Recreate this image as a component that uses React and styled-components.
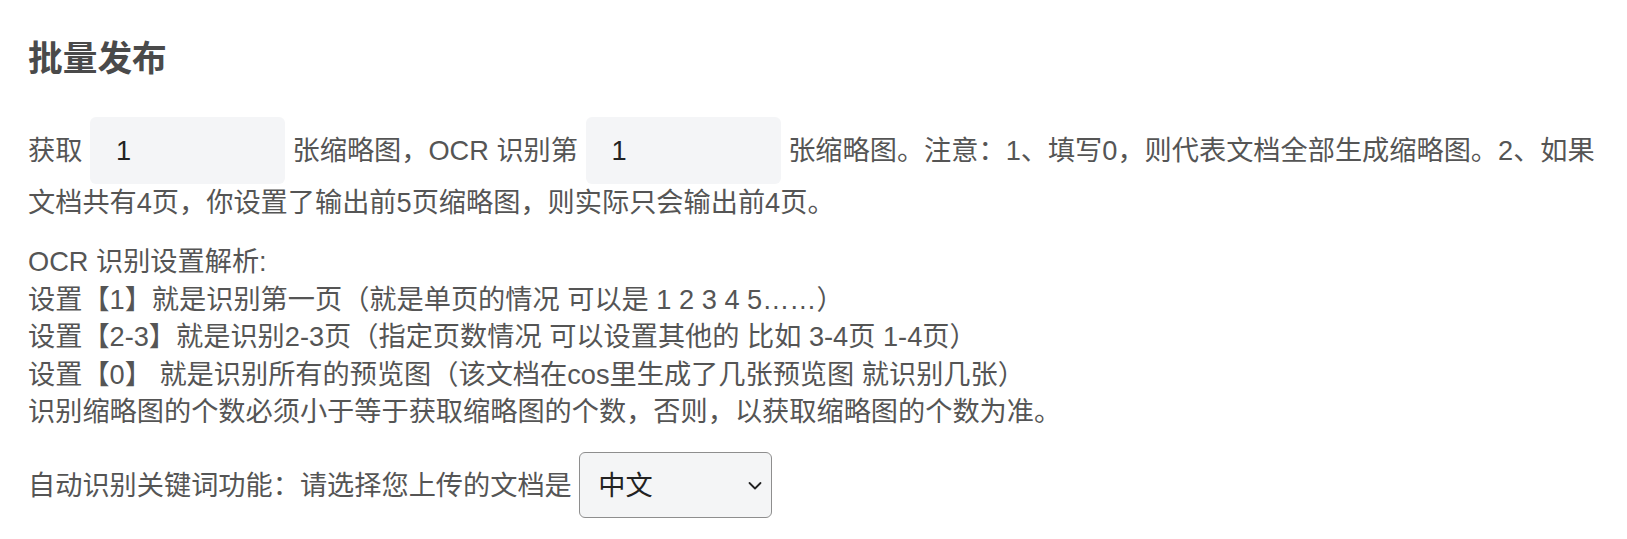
import React, { useState } from "react";
import styled, { createGlobalStyle } from "styled-components";

const GlobalStyle = createGlobalStyle`
  html, body {
    margin: 0;
    padding: 0;
    background: #fff;
  }
  body {
    font-family: "Liberation Sans", "Noto Sans CJK SC", sans-serif;
  }
`;

const Page = styled.div`
  padding: 39px 28px 0;
  color: #555;
  font-size: 27.2px;
  line-height: 37.5px;
`;

const Heading = styled.h2`
  margin: 0 0 37px;
  font-size: 34.7px;
  line-height: 41px;
  font-weight: 700;
  color: #4a4a4a;
`;

const Paragraph = styled.p`
  margin: 0 0 21.5px;
`;

const NumberInput = styled.input`
  box-sizing: border-box;
  width: 195px;
  height: 67px;
  padding: 0 0 0 26px;
  border: none;
  border-radius: 6px;
  background: #f4f5f7;
  color: #222;
  font-family: inherit;
  font-size: 27.2px;
  outline: none;
`;

const SelectWrap = styled.span`
  position: relative;
  display: inline-block;
  vertical-align: baseline;
`;

const LangSelect = styled.select`
  box-sizing: border-box;
  width: 193px;
  height: 66px;
  padding: 0 40px 0 18px;
  border: 1px solid #8e8e8e;
  border-radius: 6px;
  background: #f4f5f6;
  color: #222;
  font-family: inherit;
  font-size: 27.2px;
  appearance: none;
  -webkit-appearance: none;
  outline: none;
`;

const Chevron = styled.svg`
  position: absolute;
  right: 9px;
  top: 50%;
  width: 16px;
  height: 10px;
  margin-top: -4px;
  pointer-events: none;
`;

const App = () => {
  const [thumbCount, setThumbCount] = useState("1");
  const [ocrPage, setOcrPage] = useState("1");
  const [lang, setLang] = useState("zh");

  return (
    <Page>
      <GlobalStyle />
      <Heading>批量发布</Heading>
      <Paragraph>
        获取{" "}
        <NumberInput
          value={thumbCount}
          onChange={(e) => setThumbCount(e.target.value)}
        />{" "}
        张缩略图，OCR 识别第{" "}
        <NumberInput
          value={ocrPage}
          onChange={(e) => setOcrPage(e.target.value)}
        />{" "}
        张缩略图。注意：1、填写0，则代表文档全部生成缩略图。2、如果文档共有4页，你设置了输出前5页缩略图，则实际只会输出前4页。
      </Paragraph>
      <Paragraph>
        OCR 识别设置解析:
        <br />
        设置【1】就是识别第一页（就是单页的情况 可以是 1 2 3 4 5……）
        <br />
        设置【2-3】就是识别2-3页（指定页数情况 可以设置其他的 比如 3-4页 1-4页）
        <br />
        设置【0】 就是识别所有的预览图（该文档在cos里生成了几张预览图 就识别几张）
        <br />
        识别缩略图的个数必须小于等于获取缩略图的个数，否则，以获取缩略图的个数为准。
      </Paragraph>
      <Paragraph>
        自动识别关键词功能：请选择您上传的文档是{" "}
        <SelectWrap>
          <LangSelect value={lang} onChange={(e) => setLang(e.target.value)}>
            <option value="zh">中文</option>
            <option value="en">英文</option>
          </LangSelect>
          <Chevron viewBox="0 0 16 10">
            <path
              d="M2.5 2 L8 7.5 L13.5 2"
              fill="none"
              stroke="#222"
              strokeWidth="1.8"
              strokeLinecap="round"
              strokeLinejoin="round"
            />
          </Chevron>
        </SelectWrap>
      </Paragraph>
    </Page>
  );
};

export default App;
